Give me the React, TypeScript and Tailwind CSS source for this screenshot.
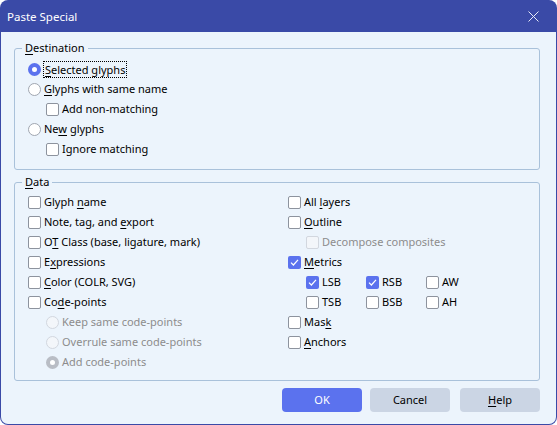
import type { ReactNode } from 'react';

const font = { fontFamily: '"Noto Sans", "Liberation Sans", sans-serif' };

function U({ children }: { children: ReactNode }) {
  return <span className="underline underline-offset-[2px] decoration-[1px]">{children}</span>;
}

function Check({ checked = false, disabled = false }: { checked?: boolean; disabled?: boolean }) {
  if (checked) {
    return (
      <span className="w-[13px] h-[13px] rounded-[2px] bg-[#5b72ee] flex items-center justify-center shrink-0">
        <svg width="9" height="9" viewBox="0 0 9 9" fill="none">
          <path d="M1 4.6 L3.4 7 L8 1.8" stroke="white" strokeWidth="1.2" />
        </svg>
      </span>
    );
  }
  return (
    <span
      className={`w-[13px] h-[13px] rounded-[2px] border shrink-0 ${
        disabled ? 'border-[#d2d7df] bg-[#f3f6fa]' : 'border-[#8d939e] bg-white'
      }`}
    />
  );
}

function Radio({ checked = false, disabled = false }: { checked?: boolean; disabled?: boolean }) {
  if (checked) {
    return (
      <span
        className={`w-[13px] h-[13px] rounded-full border-[4px] bg-white shrink-0 ${
          disabled ? 'border-[#b9bdc5]' : 'border-[#5b72ee]'
        }`}
      />
    );
  }
  return (
    <span
      className={`w-[13px] h-[13px] rounded-full border shrink-0 ${
        disabled ? 'border-[#d2d7df] bg-[#f3f6fa]' : 'border-[#a0a6b0] bg-white'
      }`}
    />
  );
}

function Row({
  control,
  children,
  disabled = false,
  indent = false,
}: {
  control: ReactNode;
  children: ReactNode;
  disabled?: boolean;
  indent?: boolean;
}) {
  return (
    <div className={`h-[20px] flex items-center gap-[3px] ${indent ? 'pl-[18px]' : ''}`}>
      {control}
      <span className={disabled ? 'text-[#8c8c8c]' : 'text-black'}>{children}</span>
    </div>
  );
}

function GroupBox({ label, className, children }: { label: ReactNode; className: string; children: ReactNode }) {
  return (
    <div className={`relative border border-[#a9c1da] rounded-[3px] w-[526px] ${className}`}>
      <span className="absolute left-[7px] top-[-9px] px-[3px] bg-[#ecf4fc] leading-[16px]">{label}</span>
      {children}
    </div>
  );
}

function Button({ children, primary = false, className = '' }: { children: ReactNode; primary?: boolean; className?: string }) {
  return (
    <button
      className={`w-[80px] h-[24px] rounded-[4px] flex items-center justify-center ${
        primary ? 'bg-[#5b72ee] text-white' : 'bg-[#cbd5e4] text-black'
      } ${className}`}
    >
      {children}
    </button>
  );
}

export default function App() {
  return (
    <div style={font} className="w-[557px] h-[425px] text-[11px] leading-[16px] bg-white">
      <div className="w-full h-full bg-[#3a4aa7] rounded-[8px] px-[1px] pb-[1px] flex flex-col">
        <div className="h-[32px] flex items-center justify-between pl-[6px] pr-[17px] pt-[1px] text-white text-[11.5px]">
          <span>Paste Special</span>
          <svg width="11" height="11" viewBox="0 0 11 11">
            <path d="M0.5 0.5 L10.5 10.5 M10.5 0.5 L0.5 10.5" stroke="#e8ebf6" strokeWidth="1" />
          </svg>
        </div>

        <div className="flex-1 bg-[#ecf4fc] rounded-b-[7px] pl-[13px] pt-[16px]">
          <GroupBox label={<><U>D</U>estination</>} className="h-[122px] pt-[10px] pl-[13px]">
            <div className="h-[20px] flex items-center gap-[2px]">
              <Radio checked />
              <span className="border border-dotted border-black px-[1px] h-[17px] leading-[15px]">
                <U>S</U>elected glyphs
              </span>
            </div>
            <Row control={<Radio />}>
              <U>G</U>lyphs with same name
            </Row>
            <Row indent control={<Check />}>Add non-matching</Row>
            <Row control={<Radio />}>
              Ne<U>w</U> glyphs
            </Row>
            <Row indent control={<Check />}>Ignore matching</Row>
          </GroupBox>

          <GroupBox label={<><U>D</U>ata</>} className="h-[199px] mt-[12px] pt-[9px] pl-[13px] flex">
            <div className="w-[260px]">
              <Row control={<Check />}>
                Glyph <U>n</U>ame
              </Row>
              <Row control={<Check />}>
                Note, tag, and <U>e</U>xport
              </Row>
              <Row control={<Check />}>
                O<U>T</U> Class (base, ligature, mark)
              </Row>
              <Row control={<Check />}>
                E<U>x</U>pressions
              </Row>
              <Row control={<Check />}>
                <U>C</U>olor (COLR, SVG)
              </Row>
              <Row control={<Check />}>
                Co<U>d</U>e-points
              </Row>
              <Row indent disabled control={<Radio disabled />}>Keep same code-points</Row>
              <Row indent disabled control={<Radio disabled />}>Overrule same code-points</Row>
              <Row indent disabled control={<Radio checked disabled />}>Add code-points</Row>
            </div>
            <div>
              <Row control={<Check />}>
                All <U>l</U>ayers
              </Row>
              <Row control={<Check />}>
                <U>O</U>utline
              </Row>
              <Row indent disabled control={<Check disabled />}>Decompose composites</Row>
              <Row control={<Check checked />}>
                <U>M</U>etrics
              </Row>
              <div className="grid grid-cols-[60px_60px_60px] pl-[18px]">
                <Row control={<Check checked />}>LSB</Row>
                <Row control={<Check checked />}>RSB</Row>
                <Row control={<Check />}>AW</Row>
                <Row control={<Check />}>TSB</Row>
                <Row control={<Check />}>BSB</Row>
                <Row control={<Check />}>AH</Row>
              </div>
              <Row control={<Check />}>
                Mas<U>k</U>
              </Row>
              <Row control={<Check />}>
                <U>A</U>nchors
              </Row>
            </div>
          </GroupBox>

          <div className="flex mt-[7px] pl-[268px]">
            <Button primary>OK</Button>
            <Button className="ml-[8px]">Cancel</Button>
            <Button className="ml-[10px]">
              <span>
                <U>H</U>elp
              </span>
            </Button>
          </div>
        </div>
      </div>
    </div>
  );
}
